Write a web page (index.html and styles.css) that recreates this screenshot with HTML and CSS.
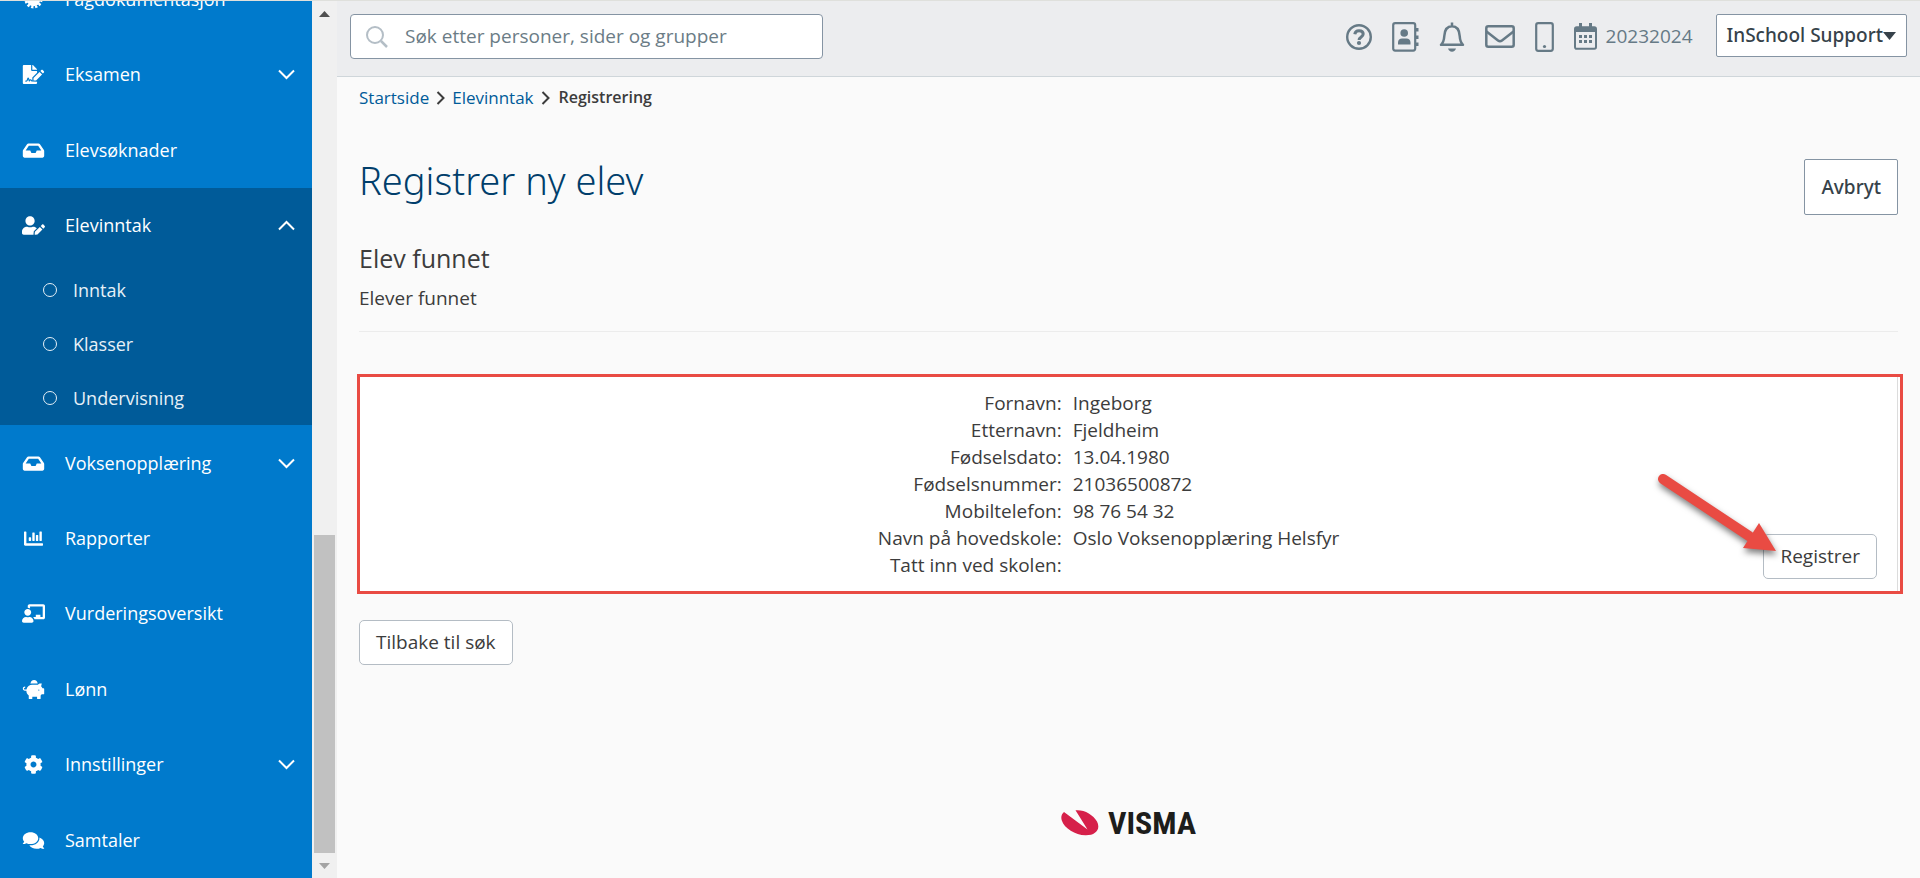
FILE: index.html
```html
<!DOCTYPE html>
<html lang="no">
<head>
  <meta charset="UTF-8">
  <title>Registrer ny elev</title>
  <link rel="stylesheet" href="styles.css">
</head>
<body>

  <svg class="sprite" aria-hidden="true">
    <symbol id="chevron" viewBox="0 0 17 11"><path d="M1 1.5l7.500 7.500 7.500-7.500" fill="none" stroke="currentColor" stroke-width="2"/></symbol>
    <symbol id="inbox" viewBox="0 0 576 512"><path d="M567.938 243.908L462.250 85.374A48.003 48.003 0 0 0 422.311 64H153.689a48 48 0 0 0-39.938 21.374L8.062 243.908A47.994 47.994 0 0 0 0 270.533V400c0 26.510 21.490 48 48 48h480c26.510 0 48-21.490 48-48V270.533a47.994 47.994 0 0 0-8.062-26.625zM162.252 128h251.497l85.333 128H376l-32 64H232l-32-64H76.918l85.334-128z"/></symbol>
  </svg>

  <div class="app">

    <nav class="sidebar">
      <a href="#" class="nav-item nav-first">
        <svg class="nav-icon" viewBox="0 0 20 20"><circle cx="10" cy="10" r="7"/><circle cx="10" cy="10" r="8" fill="none" stroke="#fff" stroke-width="3" stroke-dasharray="2.400 1.790"/></svg>
        <span>Fagdokumentasjon</span>
      </a>
      <a href="#" class="nav-item">
        <svg class="nav-icon" viewBox="0 0 576 512"><path d="M218.170 424.140c-2.950-5.920-8.090-6.520-10.170-6.520s-7.220.59-10.020 6.190l-7.670 15.340c-6.370 12.780-25.030 11.370-29.480-2.090L144 386.590l-10.610 31.880c-5.890 17.660-22.380 29.530-41 29.530H80c-8.840 0-16-7.160-16-16s7.160-16 16-16h12.390c4.830 0 9.110-3.080 10.640-7.660l18.190-54.640c3.300-9.810 12.440-16.410 22.780-16.410s19.480 6.590 22.770 16.410l13.880 41.640c19.750-16.190 54.060-9.700 66 14.160 1.890 3.780 5.490 5.950 9.360 6.260v-82.120l128-127.090V160H248c-13.200 0-24-10.800-24-24V0H24C10.700 0 0 10.700 0 24v464c0 13.300 10.700 24 24 24h336c13.300 0 24-10.700 24-24v-40l-128-.11c-16.120-.31-30.580-9.280-37.830-23.750zM384 121.900c0-6.300-2.500-12.400-7-16.900L279.100 7c-4.500-4.500-10.600-7-17-7H256v128h128v-6.100zm-96 225.060V416h68.990l161.680-162.780-67.880-67.880L288 346.960zm280.540-179.630l-31.870-31.870c-9.940-9.940-26.070-9.940-36.010 0l-27.250 27.250 67.880 67.880 27.250-27.250c9.950-9.940 9.950-26.070 0-36.010z"/></svg>
        <span>Eksamen</span>
        <svg class="chevron"><use href="#chevron"/></svg>
      </a>
      <a href="#" class="nav-item">
        <svg class="nav-icon"><use href="#inbox"/></svg>
        <span>Elevsøknader</span>
      </a>
      <a href="#" class="nav-item active">
        <svg class="nav-icon" viewBox="0 0 640 512"><path d="M224 256c70.700 0 128-57.300 128-128S294.700 0 224 0 96 57.300 96 128s57.300 128 128 128zm89.600 32h-16.700c-22.200 10.200-46.900 16-72.900 16s-50.600-5.800-72.900-16h-16.700C60.200 288 0 348.200 0 422.400V464c0 26.500 21.500 48 48 48h274.900c-2.400-6.800-3.400-14-2.600-21.300l6.800-60.900 1.200-11.100 7.900-7.900 77.300-77.300c-24.500-27.700-60-45.500-99.900-45.500zm45.300 145.300l-6.800 61c-1.100 10.200 7.500 18.800 17.600 17.600l60.900-6.800 137.900-137.900-71.700-71.700-137.900 137.800zM633 268.900L595.100 231c-9.300-9.300-24.500-9.300-33.800 0l-37.800 37.800-4.100 4.100 71.800 71.700 41.800-41.800c9.300-9.400 9.300-24.500 0-33.900z"/></svg>
        <span>Elevinntak</span>
        <svg class="chevron open"><use href="#chevron"/></svg>
      </a>
      <div class="submenu">
        <a href="#" class="sub-item"><span class="ring"></span>Inntak</a>
        <a href="#" class="sub-item"><span class="ring"></span>Klasser</a>
        <a href="#" class="sub-item"><span class="ring"></span>Undervisning</a>
      </div>
      <a href="#" class="nav-item">
        <svg class="nav-icon"><use href="#inbox"/></svg>
        <span>Voksenopplæring</span>
        <svg class="chevron"><use href="#chevron"/></svg>
      </a>
      <a href="#" class="nav-item">
        <svg class="nav-icon" viewBox="0 0 512 512"><path d="M332.800 320h38.400c6.400 0 12.800-6.400 12.800-12.800V172.800c0-6.400-6.400-12.800-12.800-12.800h-38.400c-6.400 0-12.800 6.400-12.800 12.800v134.400c0 6.400 6.400 12.800 12.800 12.800zm96 0h38.400c6.400 0 12.800-6.400 12.800-12.800V76.800c0-6.400-6.400-12.800-12.800-12.800h-38.400c-6.400 0-12.800 6.400-12.800 12.800v230.400c0 6.400 6.400 12.800 12.800 12.800zm-288 0h38.400c6.400 0 12.800-6.400 12.800-12.800v-70.400c0-6.400-6.400-12.800-12.800-12.800h-38.400c-6.400 0-12.800 6.400-12.800 12.800v70.400c0 6.400 6.400 12.800 12.800 12.800zm96 0h38.400c6.400 0 12.800-6.400 12.800-12.800V108.800c0-6.400-6.400-12.800-12.800-12.800h-38.400c-6.400 0-12.800 6.400-12.800 12.800v198.400c0 6.400 6.400 12.800 12.800 12.800zM496 384H64V80c0-8.840-7.160-16-16-16H16C7.160 64 0 71.160 0 80v336c0 17.670 14.330 32 32 32h464c8.840 0 16-7.160 16-16v-32c0-8.840-7.160-16-16-16z"/></svg>
        <span>Rapporter</span>
      </a>
      <a href="#" class="nav-item">
        <svg class="nav-icon" viewBox="0 0 640 512"><path d="M208 352c-2.390 0-4.780.35-7.060 1.090C187.980 357.300 174.350 360 160 360c-14.350 0-27.980-2.700-40.950-6.910-2.280-.74-4.660-1.090-7.050-1.090C49.940 352-.33 402.480 0 464.620.14 490.880 21.730 512 48 512h224c26.270 0 47.860-21.120 48-47.380.33-62.140-49.940-112.620-112-112.620zm-48-32c53.020 0 96-42.980 96-96s-42.980-96-96-96-96 42.980-96 96 42.980 96 96 96zM592 0H208c-26.470 0-48 22.250-48 49.590V96c23.420 0 45.100 6.780 64 17.800V64h352v288h-64v-64H384v64h-76.240c19.100 16.690 33.120 38.730 39.690 64H592c26.470 0 48-22.250 48-49.590V49.590C640 22.250 618.470 0 592 0z"/></svg>
        <span>Vurderingsoversikt</span>
      </a>
      <a href="#" class="nav-item">
        <svg class="nav-icon" viewBox="0 0 576 512"><path d="M560 224h-29.500c-8.800-20-21.600-37.700-37.400-52.500L512 96h-32c-29.400 0-55.400 13.500-73 34.300-7.600-1.100-15.100-2.300-23-2.300H256c-77.400 0-141.900 55-156.800 128H56c-14.800 0-26.500-13.500-23.500-28.800C34.700 215.800 45.400 208 57 208h1c3.300 0 6-2.700 6-6v-20c0-3.300-2.700-6-6-6-28.500 0-53.900 20.400-57.500 48.600C-3.900 258.800 22.700 288 56 288h40c0 52.200 25.400 98.100 64 127.300V496c0 8.800 7.200 16 16 16h64c8.800 0 16-7.200 16-16v-48h128v48c0 8.800 7.200 16 16 16h64c8.800 0 16-7.200 16-16v-80.700c11.800-8.900 22.300-19.400 31.300-31.300H560c8.800 0 16-7.200 16-16V240c0-8.800-7.200-16-16-16zm-128 64c-8.800 0-16-7.200-16-16s7.200-16 16-16 16 7.200 16 16-7.200 16-16 16zM256 96h128c5.400 0 10.700.4 15.900.8 0-.3.1-.5.1-.8 0-53-43-96-96-96s-96 43-96 96c0 2.100.5 4.100.6 6.200 15.200-3.900 31-6.200 47.400-6.200z"/></svg>
        <span>Lønn</span>
      </a>
      <a href="#" class="nav-item">
        <svg class="nav-icon" viewBox="0 0 512 512"><path d="M487.400 315.700l-42.600-24.600c4.300-23.200 4.300-47 0-70.200l42.600-24.600c4.900-2.800 7.100-8.600 5.500-14-11.100-35.600-30-67.800-54.700-94.600-3.800-4.100-10-5.100-14.800-2.300L380.800 110c-17.900-15.400-38.500-27.300-60.800-35.100V25.800c0-5.600-3.900-10.500-9.400-11.700-36.700-8.200-74.300-7.800-109.200 0-5.500 1.200-9.400 6.100-9.400 11.700V75c-22.200 7.900-42.800 19.800-60.800 35.100L88.700 85.500c-4.900-2.800-11-1.900-14.800 2.300-24.700 26.700-43.600 58.900-54.700 94.600-1.700 5.400.6 11.200 5.500 14L67.300 221c-4.300 23.200-4.300 47 0 70.200l-42.600 24.600c-4.900 2.800-7.100 8.600-5.500 14 11.100 35.600 30 67.800 54.700 94.600 3.800 4.100 10 5.100 14.800 2.300l42.600-24.600c17.900 15.400 38.500 27.300 60.800 35.100v49.200c0 5.600 3.900 10.500 9.400 11.700 36.700 8.200 74.300 7.800 109.200 0 5.500-1.200 9.400-6.100 9.400-11.700v-49.200c22.200-7.900 42.800-19.800 60.800-35.100l42.600 24.600c4.900 2.800 11 1.900 14.800-2.300 24.700-26.700 43.600-58.900 54.700-94.600 1.500-5.500-.7-11.300-5.600-14.100zM256 336c-44.100 0-80-35.900-80-80s35.900-80 80-80 80 35.900 80 80-35.900 80-80 80z"/></svg>
        <span>Innstillinger</span>
        <svg class="chevron"><use href="#chevron"/></svg>
      </a>
      <a href="#" class="nav-item">
        <svg class="nav-icon" viewBox="0 0 576 512"><path d="M416 192c0-88.400-93.100-160-208-160S0 103.600 0 192c0 34.300 14.100 65.900 38 92-13.400 30.200-35.500 54.200-35.800 54.500-2.200 2.300-2.800 5.700-1.500 8.700S4.800 352 8 352c36.600 0 66.900-12.300 88.700-25 32.200 15.700 70.300 25 111.300 25 114.900 0 208-71.600 208-160zm122 220c23.900-26 38-57.700 38-92 0-66.900-53.500-124.200-129.300-148.100.9 6.600 1.300 13.300 1.300 20.100 0 105.900-107.700 192-240 192-10.800 0-21.300-.8-31.700-1.900C207.800 439.600 281.800 480 368 480c41 0 79.100-9.200 111.300-25 21.800 12.700 52.100 25 88.700 25 3.200 0 6.100-1.900 7.300-4.800 1.300-2.900.7-6.300-1.500-8.700-.3-.3-22.400-24.200-35.800-54.500z"/></svg>
        <span>Samtaler</span>
      </a>
    </nav>

    <div class="scrollbar">
      <div class="scroll-end"><svg width="11" height="6" viewBox="0 0 11 6"><path d="M5.500 0L11 6H0z" fill="#505050"/></svg></div>
      <div class="scroll-space"></div>
      <div class="scroll-thumb"></div>
      <div class="scroll-end"><svg width="11" height="6" viewBox="0 0 11 6"><path d="M5.500 6L11 0H0z" fill="#a3a3a3"/></svg></div>
    </div>

    <div class="page">

      <header class="header">
        <div class="search">
          <svg width="22" height="22" viewBox="0 0 22 22" fill="none" stroke="#b4bec6" stroke-width="2"><circle cx="9" cy="9" r="8"/><path d="M15 15l6 6" stroke-width="2.500"/></svg>
          <input type="search" class="search-input" aria-label="Søk" placeholder="Søk etter personer, sider og grupper">
        </div>

        <div class="header-icons">
          <button class="icon-button" aria-label="Hjelp">
            <svg width="26" height="26" viewBox="0 0 26 26" fill="none" stroke="#667a86" stroke-width="2.400"><circle cx="13" cy="13" r="11.800"/><path d="M8.800 10.300c.3-2.300 1.900-3.500 4.200-3.500 2.400 0 4.200 1.300 4.200 3.300 0 3-4.100 2.800-4.100 5.900" stroke-width="3"/><circle cx="13" cy="19" r="2.100" fill="#667a86" stroke="none"/></svg>
          </button>
          <button class="icon-button" aria-label="Kontakter">
            <svg width="27" height="30" viewBox="0 0 27 30"><rect x="1.200" y="1.200" width="22" height="27.400" rx="2" fill="none" stroke="#667a86" stroke-width="2.200"/><circle cx="12.200" cy="11" r="3.800" fill="#667a86"/><path d="M6 22.500v-2c0-2.500 1.800-4 4-4h4.500c2.200 0 4 1.500 4 4v2zM24 6h2.500v3.500H24zM24 13.500h2.500V17H24zM24 20.500h2.500V24H24z" fill="#667a86"/></svg>
          </button>
          <button class="icon-button" aria-label="Varsler">
            <svg width="26" height="30" viewBox="0 0 26 30"><path d="M2 22.800h22c-2.400-2.200-3-4-3.300-8.800C20.300 7.500 17.500 4.300 13 4.300S5.700 7.500 5.300 14C5 18.800 4.400 20.600 2 22.800zM13 0.500v4" fill="none" stroke="#667a86" stroke-width="2.500" stroke-linejoin="round"/><path d="M9 26.500h8c-.5 2-2 3.200-4 3.200s-3.500-1.200-4-3.200z" fill="#667a86"/></svg>
          </button>
          <button class="icon-button" aria-label="Meldinger">
            <svg width="30" height="23" viewBox="0 0 30 23" fill="none" stroke="#667a86" stroke-width="2.500"><rect x="1.300" y="1.300" width="27.400" height="20.400" rx="2"/><path d="M1.500 6.500l11.500 9c1.300 1 2.700 1 4 0l11.500-9"/></svg>
          </button>
          <button class="icon-button" aria-label="Mobil">
            <svg width="19" height="30" viewBox="0 0 19 30"><rect x="1.200" y="1.200" width="16.600" height="27.600" rx="2" fill="none" stroke="#667a86" stroke-width="2.200"/><circle cx="9.500" cy="24.500" r="1.600" fill="#667a86"/></svg>
          </button>
          <button class="icon-button school-year">
            <svg width="23" height="27" viewBox="0 0 23 27"><path d="M1 8h21v16c0 1-.6 1.800-1.600 1.800H2.600C1.600 25.800 1 25 1 24z" fill="none" stroke="#667a86" stroke-width="2"/><path d="M0 8.500V6c0-1.700 1-2.700 2.700-2.700H5V0h3v3.300h7V0h3v3.300h2.300C22 3.300 23 4.300 23 6v2.500z" fill="#667a86"/><path d="M5 13.500h13M5 18.500h13" stroke="#667a86" stroke-width="3" stroke-dasharray="3 2"/></svg>
            <span>20232024</span>
          </button>
        </div>

        <button class="user-button">InSchool Support<svg width="13" height="8" viewBox="0 0 13 8"><path d="M0 0h13L6.500 8z" fill="#36424a"/></svg></button>
      </header>

      <main class="content">
        <nav class="breadcrumb">
          <a href="#">Startside</a>
          <svg width="9" height="14" viewBox="0 0 9 14"><path d="M1.500 1l6 6-6 6" fill="none" stroke="#3c3c3c" stroke-width="2"/></svg>
          <a href="#">Elevinntak</a>
          <svg width="9" height="14" viewBox="0 0 9 14"><path d="M1.500 1l6 6-6 6" fill="none" stroke="#3c3c3c" stroke-width="2"/></svg>
          <span class="current">Registrering</span>
        </nav>

        <div class="title-row">
          <h1>Registrer ny elev</h1>
          <button class="cancel-button">Avbryt</button>
        </div>

        <h2>Elev funnet</h2>
        <p class="intro">Elever funnet</p>
        <hr>

        <section class="highlight">
          <div class="panel">
            <dl class="student">
              <dt>Fornavn:</dt><dd>Ingeborg</dd>
              <dt>Etternavn:</dt><dd>Fjeldheim</dd>
              <dt>Fødselsdato:</dt><dd>13.04.1980</dd>
              <dt>Fødselsnummer:</dt><dd>21036500872</dd>
              <dt>Mobiltelefon:</dt><dd>98 76 54 32</dd>
              <dt>Navn på hovedskole:</dt><dd>Oslo Voksenopplæring Helsfyr</dd>
              <dt>Tatt inn ved skolen:</dt><dd></dd>
            </dl>
            <div class="register">
              <button class="button">Registrer</button>
              <svg class="arrow" width="140" height="100" viewBox="0 0 140 100"><path d="M14 13L100 70" stroke="#e94b43" stroke-width="10" stroke-linecap="round"/><path d="M110 57l17 28-33-3z" fill="#e94b43"/></svg>
            </div>
          </div>
        </section>

        <button class="button">Tilbake til søk</button>

        <footer class="footer">
          <svg width="38" height="26" viewBox="0 0 38 26" fill="#d6204a"><path d="M14.500.3C23-.6 32 4.500 36 11.500c4 8-1.500 14-11.500 13.800C14 25 3.500 18.500.8 10.500-.3 7 .5 4 3 2l23.500 17.500z"/></svg>
          <span class="logo-text">VISMA</span>
        </footer>
      </main>

    </div>
  </div>

</body>
</html>
```
FILE: styles.css
```css
* {
  margin: 0;
  padding: 0;
  box-sizing: border-box;
}

body {
  font-family: "Open Sans", "Noto Sans", sans-serif;
  font-size: 19px;
  line-height: 27px;
  color: #3c3c3c;
  background-color: #fafafa;
  border-top: 1px solid #dfe0dc;
}

a {
  text-decoration: none;
}

button,
input {
  font: inherit;
  color: inherit;
}

button {
  cursor: pointer;
}

.sprite {
  display: none;
}

.app {
  display: flex;
  height: calc(100vh - 1px);
  overflow: hidden;
}

/* sidebar */
.sidebar {
  flex: 0 0 312px;
  display: flex;
  flex-direction: column;
  overflow: hidden;
  font-size: 18px;
  background-color: #007acc;
}

.nav-item {
  flex: 1 0 auto;
  display: flex;
  align-items: center;
  padding: 0 17px 0 22px;
  color: #fff;
}

.nav-first {
  flex: 0 0 76px;
  margin-top: -40px;
}

.nav-icon {
  width: 23px;
  height: 19px;
  margin-right: 20px;
  fill: #fff;
}

.chevron {
  width: 17px;
  height: 11px;
  margin-left: auto;
}

.chevron.open {
  transform: rotate(180deg);
}

.active,
.submenu {
  background-color: #005b99;
}

.sub-item {
  display: flex;
  align-items: center;
  height: 54px;
  padding-left: 43px;
  color: #e6f0f7;
}

.ring {
  width: 14px;
  height: 14px;
  margin-right: 16px;
  border: 1px solid #e6f0f7;
  border-radius: 50%;
}

/* scrollbar */
.scrollbar {
  flex: 0 0 25px;
  display: flex;
  flex-direction: column;
  align-items: center;
  background-color: #f0f0f0;
}

.scroll-end {
  display: flex;
  align-items: center;
  height: 25px;
}

.scroll-space {
  flex: 8;
}

.scroll-thumb {
  flex: 5;
  width: 21px;
  background-color: #c1c1c1;
}

/* header */
.page {
  flex: 1;
  display: flex;
  flex-direction: column;
}

.header {
  display: flex;
  align-items: flex-start;
  height: 76px;
  padding: 13px 13px 0;
  background-color: #ecedef;
  border-bottom: 1px solid #cfd6da;
}

.search {
  display: flex;
  align-items: center;
  flex: 0 1 473px;
  height: 45px;
  padding-left: 15px;
  background-color: #fff;
  border: 1px solid #8594a3;
  border-radius: 4px;
}

.search-input {
  flex: 1;
  margin-left: 17px;
  border: none;
  outline: none;
  background: none;
}

.search-input::placeholder {
  color: #6b7c86;
}

.header-icons {
  display: flex;
  align-items: center;
  gap: 20px;
  height: 45px;
  margin-left: auto;
  color: #667a86;
}

.icon-button {
  display: flex;
  align-items: center;
  border: none;
  background: none;
}

.school-year {
  gap: 9px;
}

.user-button {
  display: flex;
  align-items: center;
  height: 43px;
  margin-left: 23px;
  padding: 0 10px;
}

.user-button,
.cancel-button {
  font-family: "Noto Sans", sans-serif;
  font-weight: 500;
  color: #36424a;
  background-color: #fff;
  border: 1px solid #8594a3;
  border-radius: 2px;
}

/* content */
.content {
  flex: 1;
  display: flex;
  flex-direction: column;
  align-items: flex-start;
  padding: 7px 22px 38px;
}

.breadcrumb {
  display: flex;
  align-items: center;
  gap: 7px;
  font-size: 17px;
}

.breadcrumb a {
  color: #005b99;
}

.current {
  margin-left: 2px;
  font-size: 16px;
  font-weight: 600;
}

.title-row {
  display: flex;
  justify-content: space-between;
  align-items: flex-start;
  align-self: stretch;
  margin-top: 48px;
}

h1 {
  font-family: "Noto Sans", sans-serif;
  font-size: 38px;
  font-weight: 300;
  line-height: 42px;
  color: #003e6b;
}

.cancel-button {
  height: 56px;
  padding: 0 16px;
}

h2 {
  margin-top: 26px;
  font-size: 25px;
  font-weight: 400;
  line-height: 34px;
}

.intro {
  margin-top: 10px;
}

hr {
  align-self: stretch;
  margin-top: 19px;
  border: none;
  border-top: 1px solid #ececec;
}

.highlight {
  align-self: stretch;
  margin: 42px -5px 26px -2px;
  border: 3px solid #e94b43;
  background-color: #fff;
}

.panel {
  display: flex;
  align-items: flex-end;
  margin-right: 2px;
  padding: 13px 20px 12px 0;
  border-right: 1px solid #dcdcdc;
}

.student {
  flex: 1;
  display: grid;
  grid-template-columns: 1fr 1fr;
}

.student dt {
  text-align: right;
}

.student dd {
  padding-left: 11px;
}

.button {
  height: 45px;
  padding: 0 16px;
  background-color: #fff;
  border: 1px solid #b4bcc4;
  border-radius: 5px;
}

.register {
  position: relative;
}

.arrow {
  position: absolute;
  left: -114px;
  top: -68px;
  filter: drop-shadow(1px 4px 3px rgba(0, 0, 0, 0.5));
  pointer-events: none;
}

.footer {
  display: flex;
  align-items: center;
  align-self: center;
  gap: 9px;
  margin-top: auto;
}

.logo-text {
  font-family: "Roboto Condensed", Roboto, sans-serif;
  font-size: 32px;
  font-weight: 700;
  line-height: 34px;
  color: #1d1d1b;
}
```
